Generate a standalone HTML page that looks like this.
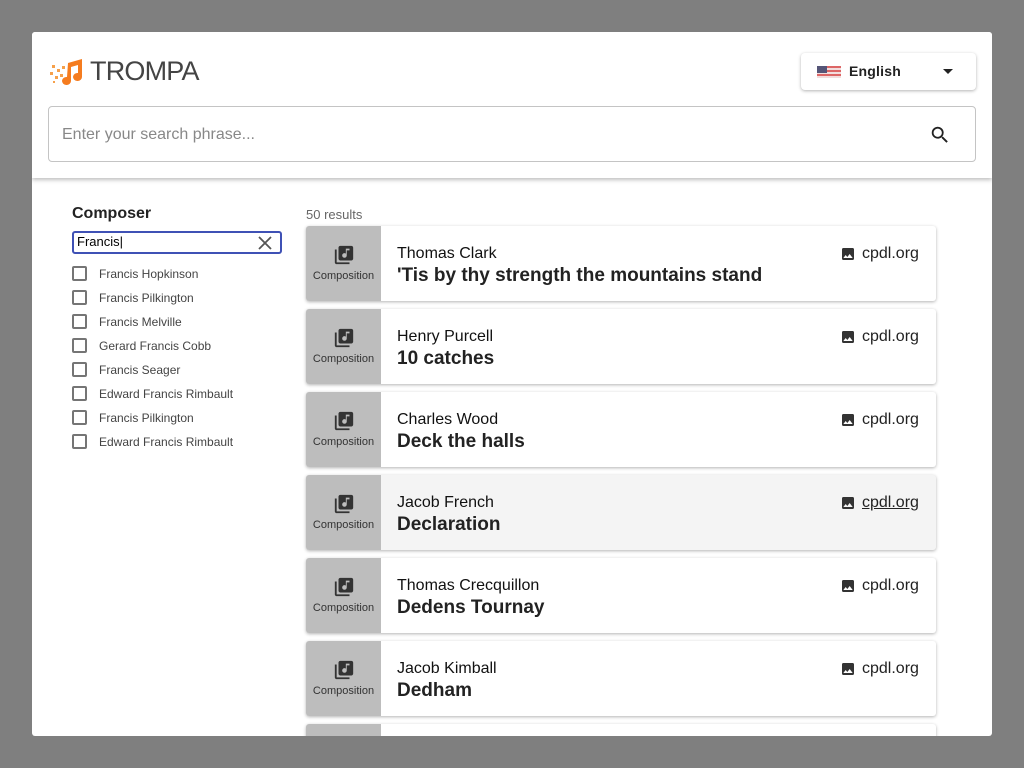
<!DOCTYPE html>
<html><head><meta charset="utf-8"><style>
*{box-sizing:border-box;margin:0;padding:0}
body{width:1024px;height:768px;background:#7f7f7f;font-family:"Liberation Sans",Roboto,sans-serif;position:relative;overflow:hidden}
.modal{position:absolute;left:32px;top:32px;width:960px;height:704px;background:#fff;border-radius:3px;overflow:hidden}
.header{position:absolute;left:0;top:0;width:960px;height:146px;background:#fff;box-shadow:0 2px 4px rgba(0,0,0,.25);z-index:2}
.logo{position:absolute;left:16px;top:24px;display:flex;align-items:center}
.logo span{font-size:27px;color:#444;letter-spacing:-0.8px;margin-left:4px}
.lang{position:absolute;left:769px;top:21px;width:175px;height:37px;border-radius:4px;box-shadow:0 1px 3px rgba(0,0,0,.3);background:#fff}
.lang .flag{position:absolute;left:16px;top:13px;width:24px;height:12px;background:repeating-linear-gradient(#d66 0 2px,#f2dede 2px 4px)}
.lang .flag:before{content:"";position:absolute;left:0;top:0;width:10px;height:7px;background:#557}
.lang .t{position:absolute;left:48px;top:10px;font-size:14px;color:#222;font-weight:bold;letter-spacing:0.2px}
.lang .c{position:absolute;left:142px;top:16px;border-left:5px solid transparent;border-right:5px solid transparent;border-top:5px solid #222}
.search{position:absolute;left:16px;top:74px;width:928px;height:56px;border:1px solid #c4c4c4;border-radius:4px}
.search .p{position:absolute;left:13px;top:19px;font-size:16px;color:#888}
.search svg{position:absolute;right:24px;top:17px}
.comp{position:absolute;left:40px;top:173px;font-size:16px;font-weight:bold;color:#222}
.fin{position:absolute;left:40px;top:199px;width:210px;height:23px;border:2px solid #3f51b5;border-radius:3px;font-size:13px;padding:1px 3px;color:#000}
.fin svg{position:absolute;right:8px;top:3px}
.cb{position:absolute;left:40px;font-size:12px;color:#444;display:flex;align-items:center}
.cb i{display:inline-block;width:15px;height:15px;border:2px solid #757575;border-radius:2px;margin-right:12px}
.res{position:absolute;left:274px;top:175px;font-size:13px;color:#666}
.card{position:absolute;left:274px;width:630px;height:75px;background:#fff;box-shadow:0 1px 3px rgba(0,0,0,.3);border-radius:3px;overflow:hidden}
.card.h{background:#f4f4f4}
.card .l{position:absolute;left:0;top:0;width:75px;height:75px;background:#bdbdbd;text-align:center}
.card .l svg{position:absolute;left:27px;top:18px}
.card .l span{position:absolute;left:0;width:75px;top:44px;font-size:11px;color:#333}
.card .a{position:absolute;left:91px;top:19px;font-size:16px;color:#111}
.card .b{position:absolute;left:91px;top:39px;font-size:19px;font-weight:bold;color:#222}
.card .s{position:absolute;left:534px;top:19px;font-size:16px;color:#222;display:flex;align-items:center}
.card .s svg{margin-right:6px}
</style></head><body>
<div class="modal">
<div class="header">
<div class="logo"><svg width="38" height="30" viewBox="0 0 38 30"><path d="M20 6 L34 2 L34 20 A4.5 4 0 1 1 30 16 L30 8 L23 10 L23 24 A4.5 4 0 1 1 19 20Z" fill="#f57c1f"/><g fill="#f6a04a"><rect x="4" y="8" width="3" height="3"/><rect x="9" y="12" width="3" height="3"/><rect x="2" y="15" width="3" height="3"/><rect x="7" y="19" width="3" height="3"/><rect x="12" y="17" width="3" height="3"/><rect x="14" y="9" width="3" height="3"/><rect x="5" y="24" width="2" height="2"/></g></svg><span>TROMPA</span></div>
<div class="lang"><div class="flag"></div><div class="t">English</div><div class="c"></div></div>
<div class="search"><div class="p">Enter your search phrase...</div><svg width="22" height="22" viewBox="0 0 24 24"><path d="M15.5 14h-.79l-.28-.27A6.47 6.47 0 0016 9.5 6.5 6.5 0 109.5 16c1.610 0 3.09-.59 4.23-1.57l.27.28v.79l5 4.99L20.49 19l-4.99-5zm-6 0C7.01 14 5 11.99 5 9.5S7.01 5 9.5 5 14 7.01 14 9.5 11.99 14 9.5 14z" fill="#222"/></svg></div>
</div>
<div class="comp">Composer</div>
<div class="fin">Francis|<svg width="14" height="14" viewBox="0 0 14 14"><path d="M1 1L13 13M13 1L1 13" stroke="#555" stroke-width="1.8"/></svg></div>
<div class="cb" style="top:234px"><i></i>Francis Hopkinson</div>
<div class="cb" style="top:258px"><i></i>Francis Pilkington</div>
<div class="cb" style="top:282px"><i></i>Francis Melville</div>
<div class="cb" style="top:306px"><i></i>Gerard Francis Cobb</div>
<div class="cb" style="top:330px"><i></i>Francis Seager</div>
<div class="cb" style="top:354px"><i></i>Edward Francis Rimbault</div>
<div class="cb" style="top:378px"><i></i>Francis Pilkington</div>
<div class="cb" style="top:402px"><i></i>Edward Francis Rimbault</div>
<div class="res">50 results</div>
<div class="card" style="top:194px"><div class="l"><svg width="22" height="22" viewBox="0 0 24 24"><path d="M20 2H8c-1.1 0-2 .9-2 2v12c0 1.1.9 2 2 2h12c1.1 0 2-.9 2-2V4c0-1.1-.9-2-2-2zm-2 5h-3v5.5a2.5 2.5 0 11-2.5-2.5c.57 0 1.08.19 1.5.51V5h4v2zM4 6H2v14c0 1.1.9 2 2 2h14v-2H4V6z" fill="#333"/></svg><span>Composition</span></div><div class="a">Thomas Clark</div><div class="b">'Tis by thy strength the mountains stand</div><div class="s"><svg width="16" height="16" viewBox="0 0 24 24"><path d="M21 19V5c0-1.1-.9-2-2-2H5c-1.1 0-2 .9-2 2v14c0 1.1.9 2 2 2h14c1.1 0 2-.9 2-2zM8.5 13.5l2.5 3.01L14.5 12l4.5 6H5l3.5-4.5z" fill="#333"/></svg>cpdl.org</div></div>
<div class="card" style="top:277px"><div class="l"><svg width="22" height="22" viewBox="0 0 24 24"><path d="M20 2H8c-1.1 0-2 .9-2 2v12c0 1.1.9 2 2 2h12c1.1 0 2-.9 2-2V4c0-1.1-.9-2-2-2zm-2 5h-3v5.5a2.5 2.5 0 11-2.5-2.5c.57 0 1.08.19 1.5.51V5h4v2zM4 6H2v14c0 1.1.9 2 2 2h14v-2H4V6z" fill="#333"/></svg><span>Composition</span></div><div class="a">Henry Purcell</div><div class="b">10 catches</div><div class="s"><svg width="16" height="16" viewBox="0 0 24 24"><path d="M21 19V5c0-1.1-.9-2-2-2H5c-1.1 0-2 .9-2 2v14c0 1.1.9 2 2 2h14c1.1 0 2-.9 2-2zM8.5 13.5l2.5 3.01L14.5 12l4.5 6H5l3.5-4.5z" fill="#333"/></svg>cpdl.org</div></div>
<div class="card" style="top:360px"><div class="l"><svg width="22" height="22" viewBox="0 0 24 24"><path d="M20 2H8c-1.1 0-2 .9-2 2v12c0 1.1.9 2 2 2h12c1.1 0 2-.9 2-2V4c0-1.1-.9-2-2-2zm-2 5h-3v5.5a2.5 2.5 0 11-2.5-2.5c.57 0 1.08.19 1.5.51V5h4v2zM4 6H2v14c0 1.1.9 2 2 2h14v-2H4V6z" fill="#333"/></svg><span>Composition</span></div><div class="a">Charles Wood</div><div class="b">Deck the halls</div><div class="s"><svg width="16" height="16" viewBox="0 0 24 24"><path d="M21 19V5c0-1.1-.9-2-2-2H5c-1.1 0-2 .9-2 2v14c0 1.1.9 2 2 2h14c1.1 0 2-.9 2-2zM8.5 13.5l2.5 3.01L14.5 12l4.5 6H5l3.5-4.5z" fill="#333"/></svg>cpdl.org</div></div>
<div class="card h" style="top:443px"><div class="l"><svg width="22" height="22" viewBox="0 0 24 24"><path d="M20 2H8c-1.1 0-2 .9-2 2v12c0 1.1.9 2 2 2h12c1.1 0 2-.9 2-2V4c0-1.1-.9-2-2-2zm-2 5h-3v5.5a2.5 2.5 0 11-2.5-2.5c.57 0 1.08.19 1.5.51V5h4v2zM4 6H2v14c0 1.1.9 2 2 2h14v-2H4V6z" fill="#333"/></svg><span>Composition</span></div><div class="a">Jacob French</div><div class="b">Declaration</div><div class="s"><svg width="16" height="16" viewBox="0 0 24 24"><path d="M21 19V5c0-1.1-.9-2-2-2H5c-1.1 0-2 .9-2 2v14c0 1.1.9 2 2 2h14c1.1 0 2-.9 2-2zM8.5 13.5l2.5 3.01L14.5 12l4.5 6H5l3.5-4.5z" fill="#333"/></svg><u>cpdl.org</u></div></div>
<div class="card" style="top:526px"><div class="l"><svg width="22" height="22" viewBox="0 0 24 24"><path d="M20 2H8c-1.1 0-2 .9-2 2v12c0 1.1.9 2 2 2h12c1.1 0 2-.9 2-2V4c0-1.1-.9-2-2-2zm-2 5h-3v5.5a2.5 2.5 0 11-2.5-2.5c.57 0 1.08.19 1.5.51V5h4v2zM4 6H2v14c0 1.1.9 2 2 2h14v-2H4V6z" fill="#333"/></svg><span>Composition</span></div><div class="a">Thomas Crecquillon</div><div class="b">Dedens Tournay</div><div class="s"><svg width="16" height="16" viewBox="0 0 24 24"><path d="M21 19V5c0-1.1-.9-2-2-2H5c-1.1 0-2 .9-2 2v14c0 1.1.9 2 2 2h14c1.1 0 2-.9 2-2zM8.5 13.5l2.5 3.01L14.5 12l4.5 6H5l3.5-4.5z" fill="#333"/></svg>cpdl.org</div></div>
<div class="card" style="top:609px"><div class="l"><svg width="22" height="22" viewBox="0 0 24 24"><path d="M20 2H8c-1.1 0-2 .9-2 2v12c0 1.1.9 2 2 2h12c1.1 0 2-.9 2-2V4c0-1.1-.9-2-2-2zm-2 5h-3v5.5a2.5 2.5 0 11-2.5-2.5c.57 0 1.08.19 1.5.51V5h4v2zM4 6H2v14c0 1.1.9 2 2 2h14v-2H4V6z" fill="#333"/></svg><span>Composition</span></div><div class="a">Jacob Kimball</div><div class="b">Dedham</div><div class="s"><svg width="16" height="16" viewBox="0 0 24 24"><path d="M21 19V5c0-1.1-.9-2-2-2H5c-1.1 0-2 .9-2 2v14c0 1.1.9 2 2 2h14c1.1 0 2-.9 2-2zM8.5 13.5l2.5 3.01L14.5 12l4.5 6H5l3.5-4.5z" fill="#333"/></svg>cpdl.org</div></div>
<div class="card" style="top:692px"><div class="l"></div></div>
</div>
</body></html>
